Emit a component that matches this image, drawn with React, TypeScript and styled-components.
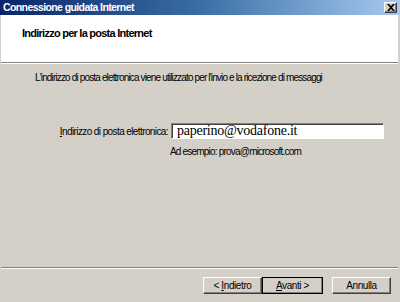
import React, { useState } from 'react'
import styled, { createGlobalStyle } from 'styled-components'

const GlobalStyle = createGlobalStyle`
  html, body {
    margin: 0;
    padding: 0;
    background: #d4d0c8;
  }
  body {
    font-family: "Liberation Sans", Arial, sans-serif;
  }
`

const Window = styled.div`
  width: 400px;
  height: 302px;
  display: flex;
  flex-direction: column;
  background: #d4d0c8;
  overflow: hidden;
`

const TitleBar = styled.div`
  height: 15px;
  flex-shrink: 0;
  display: flex;
  align-items: center;
  padding-left: 3px;
  background: linear-gradient(to right, #0a246a 0%, #3a6ea5 50%, #a6caf0 100%);
`

const TitleText = styled.span`
  color: #ffffff;
  font-size: 10.5px;
  font-weight: bold;
  letter-spacing: -0.6px;
  line-height: 15px;
`

const CloseButton = styled.button`
  margin-left: auto;
  margin-right: 3px;
  width: 13px;
  height: 11px;
  padding: 0;
  display: flex;
  align-items: center;
  justify-content: center;
  background: #d4d0c8;
  border: 1px solid;
  border-color: #ffffff #404040 #404040 #ffffff;
  box-shadow: inset -1px -1px 0 #808080;
`

const Body = styled.div`
  flex: 1;
  display: flex;
  flex-direction: column;
  padding: 0 2px 0 1px;
`

const Header = styled.div`
  height: 47px;
  flex-shrink: 0;
  background: #ffffff;
  padding: 12px 0 0 21px;
  box-sizing: border-box;
`

const HeaderTitle = styled.div`
  font-size: 11px;
  font-weight: bold;
  letter-spacing: -0.75px;
  line-height: 13px;
  color: #000000;
`

const Separator = styled.div`
  height: 1px;
  flex-shrink: 0;
  background: #808080;
  border-bottom: 1px solid #ffffff;
`

const Content = styled.div`
  flex: 1;
  display: flex;
  flex-direction: column;
  padding: 8px 0 0 34px;
`

const Intro = styled.p`
  margin: 0;
  font-size: 10px;
  line-height: 12px;
  letter-spacing: -0.85px;
  color: #000000;
`

const FieldRow = styled.div`
  display: flex;
  align-items: center;
  margin-top: 39px;
`

const Label = styled.label`
  width: 133px;
  text-align: right;
  padding-right: 3px;
  font-size: 10px;
  letter-spacing: -0.6px;
  color: #000000;
  flex-shrink: 0;
`

const TextInput = styled.input`
  width: 213px;
  height: 16px;
  box-sizing: border-box;
  padding: 0 0 0 5px;
  border: 1px solid;
  border-color: #808080 #ffffff #ffffff #808080;
  box-shadow: inset 1px 1px 0 #404040;
  background: #ffffff;
  font-family: "Liberation Serif", "Times New Roman", serif;
  font-size: 14px;
  line-height: 14px;
  letter-spacing: -0.25px;
  color: #000000;
  outline: none;
`

const Hint = styled.div`
  margin: 7px 0 0 135px;
  font-size: 10px;
  line-height: 12px;
  letter-spacing: -0.8px;
  color: #000000;
`

const Footer = styled.div`
  height: 33px;
  flex-shrink: 0;
  display: flex;
  justify-content: flex-end;
  align-items: flex-start;
  padding: 8px 7px 0 0;
  box-sizing: border-box;
`

const ButtonGroup = styled.div`
  display: flex;
  margin-right: 9px;
`

const PushButton = styled.button<{ $default?: boolean }>`
  width: ${({ $default }) => ($default ? '61px' : '59px')};
  height: 17px;
  box-sizing: border-box;
  padding: 0;
  background: #d4d0c8;
  border: 1px solid;
  border-color: #ffffff #404040 #404040 #ffffff;
  box-shadow: inset -1px -1px 0 #808080;
  outline: ${({ $default }) => ($default ? '1px solid #000000' : 'none')};
  outline-offset: -1px;
  font-family: "Liberation Sans", Arial, sans-serif;
  font-size: 10px;
  letter-spacing: -0.4px;
  color: #000000;

  u {
    text-decoration: underline;
  }
`

const CloseIcon = () => (
  <svg width="8" height="7" viewBox="0 0 8 7">
    <path d="M0 0h2l2 2 2-2h2L5 3.5 8 7H6L4 5 2 7H0l3-3.5z" fill="#000" />
  </svg>
)

export default function App() {
  const [email, setEmail] = useState('paperino@vodafone.it')

  return (
    <>
      <GlobalStyle />
      <Window>
        <TitleBar>
          <TitleText>Connessione guidata Internet</TitleText>
          <CloseButton aria-label="Chiudi">
            <CloseIcon />
          </CloseButton>
        </TitleBar>
        <Body>
          <Header>
            <HeaderTitle>Indirizzo per la posta Internet</HeaderTitle>
          </Header>
          <Separator />
          <Content>
            <Intro>
              L'indirizzo di posta elettronica viene utilizzato per l'invio e la ricezione di messaggi
            </Intro>
            <FieldRow>
              <Label htmlFor="email">
                <u>I</u>ndirizzo di posta elettronica:
              </Label>
              <TextInput id="email" value={email} onChange={(e) => setEmail(e.target.value)} />
            </FieldRow>
            <Hint>Ad esempio: prova@microsoft.com</Hint>
          </Content>
          <Separator />
          <Footer>
            <ButtonGroup>
              <PushButton>
                &lt; <u>I</u>ndietro
              </PushButton>
              <PushButton $default>
                <u>A</u>vanti &gt;
              </PushButton>
            </ButtonGroup>
            <PushButton>Annulla</PushButton>
          </Footer>
        </Body>
      </Window>
    </>
  )
}
